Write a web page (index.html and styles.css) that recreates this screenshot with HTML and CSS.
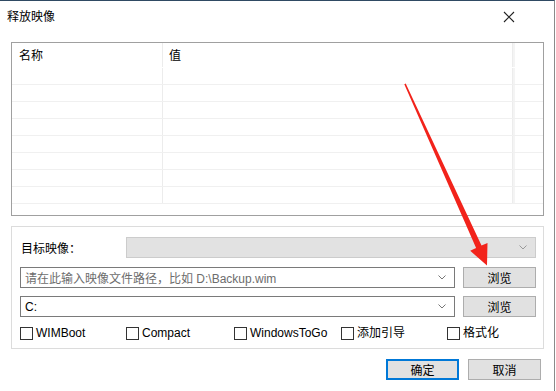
FILE: index.html
```html
<!DOCTYPE html>
<html lang="zh-CN">
<head>
    <meta charset="UTF-8">
    <title>释放映像</title>
    <link rel="stylesheet" href="styles.css">
</head>
<body>
    <div class="window">
        <div class="titlebar">
            <span class="title">释放映像</span>
            <svg class="close" width="12" height="12" viewBox="0 0 12 12">
                <path d="M1 1 L11 11 M11 1 L1 11" stroke="#222" stroke-width="1.1" fill="none"/>
            </svg>
        </div>

        <div class="list">
            <div class="list-row header">
                <div class="cell">名称</div>
                <div class="cell">值</div>
                <div class="cell last"></div>
            </div>
            <div class="list-row"><div class="cell"></div><div class="cell"></div><div class="cell last"></div></div>
            <div class="list-row"><div class="cell"></div><div class="cell"></div><div class="cell last"></div></div>
            <div class="list-row"><div class="cell"></div><div class="cell"></div><div class="cell last"></div></div>
            <div class="list-row"><div class="cell"></div><div class="cell"></div><div class="cell last"></div></div>
            <div class="list-row"><div class="cell"></div><div class="cell"></div><div class="cell last"></div></div>
            <div class="list-row"><div class="cell"></div><div class="cell"></div><div class="cell last"></div></div>
            <div class="list-row"><div class="cell"></div><div class="cell"></div><div class="cell last"></div></div>
            <div class="list-row"><div class="cell"></div><div class="cell"></div><div class="cell last"></div></div>
        </div>

        <div class="group">
            <div class="row">
                <label class="row-label">目标映像：</label>
                <div class="combo disabled">
                    <span></span>
                    <svg class="chevron" width="8" height="5" viewBox="0 0 8 5"><path d="M0.5 0.5 L4 4 L7.5 0.5" stroke="#999" fill="none"/></svg>
                </div>
            </div>
            <div class="row">
                <div class="combo path">
                    <span class="placeholder">请在此输入映像文件路径，比如 D:\Backup.wim</span>
                    <svg class="chevron" width="8" height="5" viewBox="0 0 8 5"><path d="M0.5 0.5 L4 4 L7.5 0.5" stroke="#777" fill="none"/></svg>
                </div>
                <button class="btn browse">浏览</button>
            </div>
            <div class="row">
                <div class="combo path">
                    <span>C:</span>
                    <svg class="chevron" width="8" height="5" viewBox="0 0 8 5"><path d="M0.5 0.5 L4 4 L7.5 0.5" stroke="#777" fill="none"/></svg>
                </div>
                <button class="btn browse">浏览</button>
            </div>
            <div class="checks">
                <label class="check"><span class="box"></span>WIMBoot</label>
                <label class="check"><span class="box"></span>Compact</label>
                <label class="check"><span class="box"></span>WindowsToGo</label>
                <label class="check"><span class="box"></span>添加引导</label>
                <label class="check"><span class="box"></span>格式化</label>
            </div>
        </div>

        <div class="footer">
            <button class="btn primary">确定</button>
            <button class="btn">取消</button>
        </div>

        <!-- 红色箭头标注 -->
        <svg class="arrow" width="556" height="391" viewBox="0 0 556 391">
            <polygon points="404.3,84.2 405.7,83.6 481.5,245.6 487.5,243 487,265.5 470.2,250.8 476.1,248.1" fill="#f2231b"/>
        </svg>
    </div>
</body>
</html>
```

FILE: styles.css
```css
body {
    margin: 0;
    background: #fff;
    font-family: "Liberation Sans", "Noto Sans CJK SC", sans-serif;
    font-size: 12px;
    color: #000;
}

.window {
    position: relative;
    width: 554px;
    height: 390px;
    border-top: 1px solid #2f4a63;
    border-right: 1px solid #8a8a8a;
    background: #fff;
    overflow: hidden;
}

.titlebar {
    height: 31px;
    display: flex;
    align-items: center;
    justify-content: space-between;
    padding: 0 39px 0 7px;
}

.title {
    font-size: 12px;
    line-height: 16px;
}

/* 列表 */
.list {
    margin: 10px 0 0 11px;
    width: 531px;
    height: 172px;
    border: 1px solid #a0a0a0;
    overflow: hidden;
}

.list-row {
    display: grid;
    grid-template-columns: 151px 350px 1fr;
    height: 16px;
    border-bottom: 1px solid #f0f0f0;
}

.list-row.header {
    height: 24px;
    border-bottom: 1px solid #fff;
}

.cell {
    border-right: 1px solid #ececec;
    padding: 5px 0 0 7px;
    line-height: 16px;
}

.header .cell:nth-child(2) {
    padding-left: 6px;
}

.cell.last {
    border-right: none;
    border-left: 2px solid #f4f4f4;
    padding: 0;
}

/* 分组 */
.group {
    margin: 10px 0 0 11px;
    border: 1px solid #dcdcdc;
    padding: 10px 6px 0 8px;
    width: 517px;
    height: 111px;
}

.row {
    display: flex;
    align-items: center;
    height: 21px;
    margin-bottom: 9px;
}

.row:nth-child(2) {
    margin-bottom: 8px;
}

.row-label {
    width: 106px;
    padding-left: 1px;
    box-sizing: border-box;
}

.combo {
    display: flex;
    align-items: center;
    justify-content: space-between;
    height: 21px;
    box-sizing: border-box;
    padding: 0 8px 0 4px;
}

.combo.disabled {
    width: 410px;
    background: #e2e2e2;
    border: 1px solid #cccccc;
}

.combo.path {
    width: 435px;
    border: 1px solid #7a7a7a;
    background: #fff;
}

.placeholder {
    color: #6d6d6d;
}

.chevron {
    display: block;
}

.btn {
    font-family: inherit;
    font-size: 12px;
    height: 21px;
    width: 73px;
    padding: 0;
    background: #e1e1e1;
    border: 1px solid #adadad;
    color: #000;
}

.browse {
    margin-left: 8px;
}

.checks {
    display: grid;
    grid-template-columns: 106px 108px 107px 106px auto;
    margin-top: 1px;
}

.check {
    display: flex;
    align-items: center;
    height: 14px;
    line-height: 14px;
}

.box {
    width: 11px;
    height: 11px;
    border: 1px solid #333;
    margin-right: 3px;
    background: #fff;
}

/* 底部按钮 */
.footer {
    display: flex;
    justify-content: flex-end;
    gap: 9px;
    margin-top: 10px;
    padding-right: 13px;
}

.btn.primary {
    border: 2px solid #0078d7;
}

.arrow {
    position: absolute;
    left: 0;
    top: -1px;
    pointer-events: none;
}
```
